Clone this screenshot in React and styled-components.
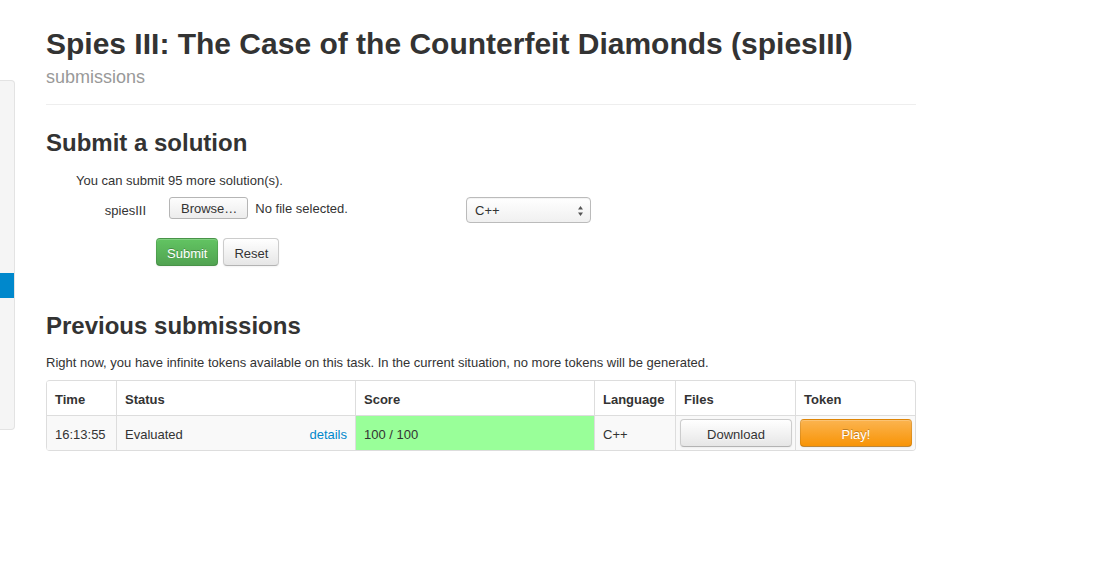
import React from "react";
import styled, { createGlobalStyle } from "styled-components";

const GlobalStyle = createGlobalStyle`
  body {
    margin: 0;
    background: #fff;
    font-family: "Liberation Sans", Arial, sans-serif;
    font-size: 13px;
    color: #333;
  }
`;

const Page = styled.div`
  display: flex;
  align-items: flex-start;
  width: 1100px;
  height: 567px;
  overflow: hidden;
`;

const Sidebar = styled.div`
  flex: 0 0 15px;
  height: 350px;
  margin-top: 80px;
  background: #f5f5f5;
  border: 1px solid #e3e3e3;
  border-left: none;
  border-radius: 0 4px 4px 0;
  padding-top: 192px;
  box-sizing: border-box;
`;

const ActiveItem = styled.div`
  height: 25px;
  background: #0088cc;
`;

const Main = styled.div`
  margin-left: 31px;
  width: 870px;
`;

const Header = styled.div`
  padding-bottom: 17px;
  border-bottom: 1px solid #eee;
`;

const Title = styled.h1`
  margin: 24px 0 0;
  font-size: 30px;
  line-height: 40px;
  font-weight: bold;
  color: #333;
`;

const Subtitle = styled.div`
  margin-top: 3px;
  font-size: 18px;
  line-height: 20px;
  color: #999;
`;

const SectionTitle = styled.h2`
  margin: ${(p) => p.$top}px 0 0;
  font-size: 24px;
  line-height: 30px;
  font-weight: bold;
  color: #333;
`;

const Note = styled.p`
  margin: ${(p) => p.$top || 14}px 0 0 ${(p) => p.$indent || 0}px;
  line-height: 18px;
`;

const FormRow = styled.div`
  display: flex;
  align-items: flex-start;
  margin-top: ${(p) => p.$top}px;
`;

const Label = styled.div`
  width: 100px;
  text-align: right;
  line-height: 22px;
  margin-top: 3px;
`;

const FileControl = styled.div`
  display: flex;
  align-items: center;
  width: 297px;
  margin-left: 23px;
  gap: 7px;
`;

const BrowseButton = styled.button`
  height: 22px;
  padding: 1px 10px 0 11px;
  font-family: inherit;
  font-size: 13px;
  color: #333;
  background: linear-gradient(#fdfdfd, #ececec);
  border: 1px solid #b5b5b5;
  border-radius: 3px;
`;

const FileText = styled.span`
  color: #333;
`;

const SelectBox = styled.div`
  display: flex;
  align-items: center;
  justify-content: space-between;
  width: 125px;
  height: 26px;
  box-sizing: border-box;
  padding: 1px 6px 0 8px;
  border: 1px solid #bbb;
  border-radius: 4px;
  background: linear-gradient(#ffffff, #f0f0f0);
  box-shadow: inset 0 1px 1px rgba(0, 0, 0, 0.05);
  font-size: 13px;
`;

const ButtonRow = styled.div`
  display: flex;
  gap: 5px;
  margin: 15px 0 0 110px;
`;

const Btn = styled.button`
  height: 28px;
  padding: 3px 10px 0;
  font-family: inherit;
  font-size: 13px;
  line-height: 18px;
  border-radius: 4px;
  cursor: pointer;
  color: ${(p) => (p.$kind === "default" ? "#333" : "#fff")};
  text-shadow: ${(p) =>
    p.$kind === "default" ? "0 1px 1px rgba(255,255,255,0.75)" : "0 -1px 0 rgba(0,0,0,0.25)"};
  border: 1px solid ${(p) => (p.$kind === "default" ? "#ccc" : "rgba(0,0,0,0.1)")};
  border-bottom-color: ${(p) => (p.$kind === "default" ? "#b3b3b3" : "rgba(0,0,0,0.25)")};
  box-shadow: inset 0 1px 0 rgba(255, 255, 255, 0.2), 0 1px 2px rgba(0, 0, 0, 0.05);
  background: ${(p) =>
    p.$kind === "success"
      ? "linear-gradient(#62c462, #51a351)"
      : p.$kind === "warning"
      ? "linear-gradient(#fbb450, #f89406)"
      : "linear-gradient(#ffffff, #e6e6e6)"};
  width: ${(p) => (p.$block ? "100%" : "auto")};
`;

const Table = styled.table`
  margin-top: 8px;
  width: 870px;
  table-layout: fixed;
  border-collapse: separate;
  border-spacing: 0;
  border: 1px solid #ddd;
  border-left: 0;
  border-radius: 4px;
  overflow: hidden;

  th,
  td {
    border-left: 1px solid #ddd;
    padding: 10px 8px 6px;
    line-height: 18px;
    text-align: left;
    vertical-align: top;
  }
  th {
    font-weight: bold;
  }
  td {
    border-top: 1px solid #ddd;
    background: #f9f9f9;
  }
`;

const ScoreCell = styled.td`
  && {
    background: #99ff99;
  }
`;

const ButtonCell = styled.td`
  && {
    padding: 3px 3px 3px 4px;
  }
`;

const StatusLine = styled.div`
  display: flex;
  justify-content: space-between;
`;

const DetailsLink = styled.a`
  color: #0088cc;
  text-decoration: none;
`;

const Arrows = () => (
  <svg width="7" height="12" viewBox="0 0 7 12">
    <path d="M3.5 1 L6 4.5 H1 Z" fill="#555" />
    <path d="M3.5 11 L6 7.5 H1 Z" fill="#555" />
  </svg>
);

const columns = [70, 239, 239, 81, 120, 120];

export default function App() {
  return (
    <>
      <GlobalStyle />
      <Page>
        <Sidebar>
          <ActiveItem />
        </Sidebar>
        <Main>
          <Header>
            <Title>Spies III: The Case of the Counterfeit Diamonds (spiesIII)</Title>
            <Subtitle>submissions</Subtitle>
          </Header>

          <SectionTitle $top={23}>Submit a solution</SectionTitle>
          <Note $indent={30} $top={14}>
            You can submit 95 more solution(s).
          </Note>
          <FormRow $top={7}>
            <Label>spiesIII</Label>
            <FileControl>
              <BrowseButton>Browse…</BrowseButton>
              <FileText>No file selected.</FileText>
            </FileControl>
            <SelectBox>
              <span>C++</span>
              <Arrows />
            </SelectBox>
          </FormRow>
          <ButtonRow>
            <Btn $kind="success">Submit</Btn>
            <Btn $kind="default">Reset</Btn>
          </ButtonRow>

          <SectionTitle $top={45}>Previous submissions</SectionTitle>
          <Note $top={13}>
            Right now, you have infinite tokens available on this task. In the current situation, no
            more tokens will be generated.
          </Note>
          <Table>
            <colgroup>
              {columns.map((w, i) => (
                <col key={i} style={{ width: w }} />
              ))}
            </colgroup>
            <thead>
              <tr>
                <th>Time</th>
                <th>Status</th>
                <th>Score</th>
                <th>Language</th>
                <th>Files</th>
                <th>Token</th>
              </tr>
            </thead>
            <tbody>
              <tr>
                <td>16:13:55</td>
                <td>
                  <StatusLine>
                    <span>Evaluated</span>
                    <DetailsLink href="#">details</DetailsLink>
                  </StatusLine>
                </td>
                <ScoreCell>100 / 100</ScoreCell>
                <td>C++</td>
                <ButtonCell>
                  <Btn $kind="default" $block>
                    Download
                  </Btn>
                </ButtonCell>
                <ButtonCell>
                  <Btn $kind="warning" $block>
                    Play!
                  </Btn>
                </ButtonCell>
              </tr>
            </tbody>
          </Table>
        </Main>
      </Page>
    </>
  );
}
